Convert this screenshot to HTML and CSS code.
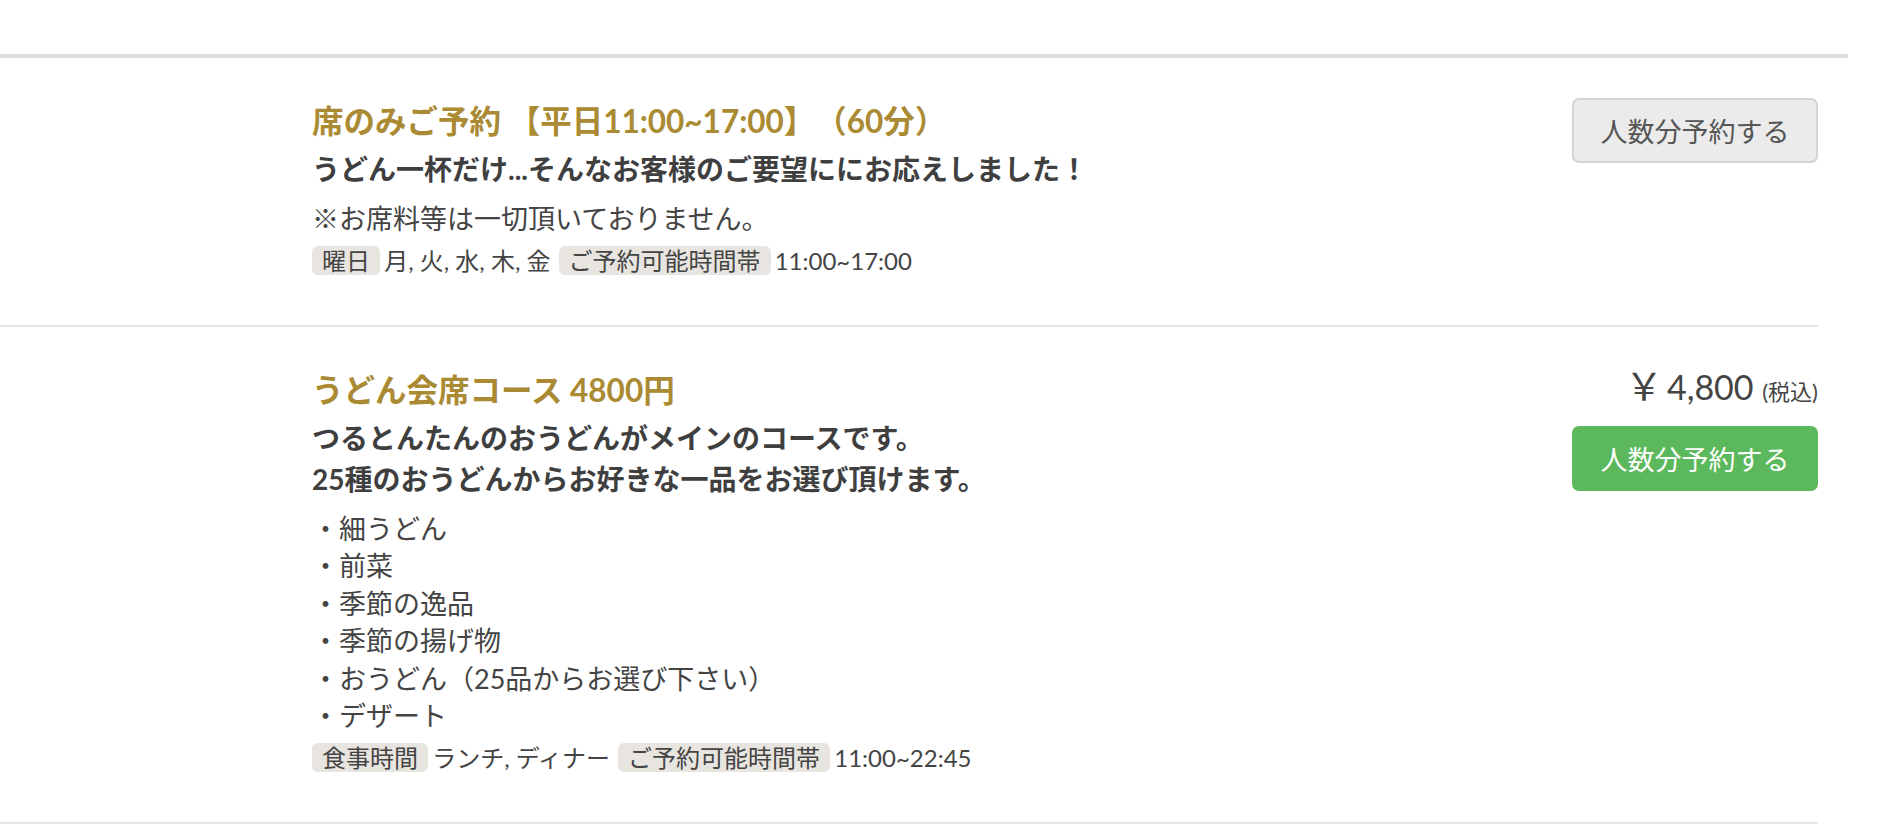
FILE: index.html
```html
<!DOCTYPE html>
<html lang="ja">
<head>
  <meta charset="UTF-8">
  <meta name="viewport" content="width=device-width, initial-scale=1.0">
  <title>コース・プラン</title>
  <link rel="stylesheet" href="styles.css">
</head>
<body>
  <div class="list-head"></div>

  <div class="course-list">
    <!-- 席のみ -->
    <div class="course">
      <div class="course-info">
        <h3 class="course-title">席のみご予約 【平日11:00~17:00】（60分）</h3>
        <p class="course-lead">うどん一杯だけ...そんなお客様のご要望ににお応えしました！</p>
        <p class="course-detail">※お席料等は一切頂いておりません。</p>
        <div class="course-meta">
          <span class="meta-item"><span class="tag">曜日</span> 月, 火, 水, 木, 金</span>
          <span class="meta-item"><span class="tag">ご予約可能時間帯</span> 11:00~17:00</span>
        </div>
      </div>
      <div class="course-side">
        <button class="btn btn-default">人数分予約する</button>
      </div>
    </div>

    <!-- 会席コース -->
    <div class="course">
      <div class="course-info">
        <h3 class="course-title">うどん会席コース 4800円</h3>
        <p class="course-lead">つるとんたんのおうどんがメインのコースです。<br>25種のおうどんからお好きな一品をお選び頂けます。</p>
        <ul class="course-items">
          <li>・細うどん</li>
          <li>・前菜</li>
          <li>・季節の逸品</li>
          <li>・季節の揚げ物</li>
          <li>・おうどん（25品からお選び下さい）</li>
          <li>・デザート</li>
        </ul>
        <div class="course-meta">
          <span class="meta-item"><span class="tag">食事時間</span> ランチ, ディナー</span>
          <span class="meta-item"><span class="tag">ご予約可能時間帯</span> 11:00~22:45</span>
        </div>
      </div>
      <div class="course-side">
        <div class="price"><span class="yen">￥</span>4,800 <small>(税込)</small></div>
        <button class="btn btn-success">人数分予約する</button>
      </div>
    </div>
  </div>
</body>
</html>
```

FILE: styles.css
```css
body {
  margin: 0;
  font-family: Lato, "Noto Sans CJK JP", sans-serif;
  color: #444;
  background: #fff;
  text-spacing-trim: space-all;
}
.list-head {
  width: 1848px;
  height: 4px;
  margin-top: 54px;
  background: #dddddd;
  border-radius: 0 2px 2px 0;
}
.course {
  display: flex;
  width: 1818px;
  box-sizing: border-box;
  padding: 40px 0 50px 312px;
  border-bottom: 2px solid #e6e6e6;
}
.course-info {
  flex: 1;
}
.course-title {
  margin: 0;
  font-size: 31.5px;
  line-height: 46px;
  font-weight: 700;
  color: #aa8a32;
}
.course-lead {
  margin: 5px 0 0;
  font-size: 28px;
  line-height: 41px;
  font-weight: 700;
  color: #3f3f3f;
}
.course-detail,
.course-items {
  margin: 10px 0 0;
  padding: 0;
  list-style: none;
  font-size: 27px;
  line-height: 37.5px;
}
.course-meta {
  display: flex;
  margin-top: 8px;
  font-size: 24px;
  line-height: 29px;
}
.meta-item {
  margin-right: 8px;
}
.tag {
  display: inline-block;
  margin-right: -2px;
  padding: 0 10px;
  background: #e8e5e0;
  border-radius: 6px;
}
.course-side {
  width: 246px;
  display: flex;
  flex-direction: column;
  align-items: flex-end;
}
.price {
  font-size: 34px;
  line-height: 40px;
  white-space: nowrap;
}
.price .yen {
  margin-right: 4px;
  font-family: "Noto Sans CJK JP", sans-serif;
  font-size: 38px;
  line-height: 0;
}
.price small {
  font-size: 22px;
}
.btn {
  width: 246px;
  height: 65px;
  padding: 0;
  font-family: inherit;
  font-size: 27px;
  border: 2px solid;
  border-radius: 7px;
  cursor: pointer;
}
.btn-default {
  background: #ebebeb;
  border-color: #d4d4d4;
  color: #555;
}
.btn-success {
  margin-top: 14px;
  background: #5cb85c;
  border-color: #5cb85c;
  color: #fff;
}
```
